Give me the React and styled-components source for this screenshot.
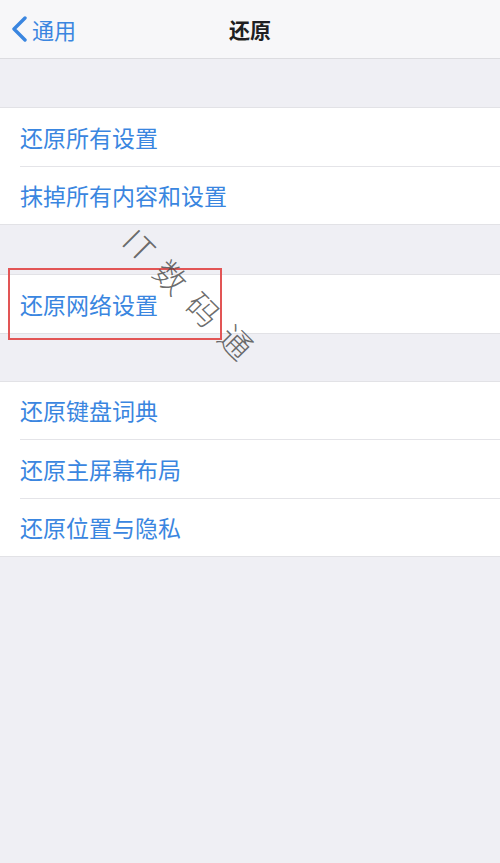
import React from "react";
import styled, { createGlobalStyle } from "styled-components";

const Global = createGlobalStyle`
  html, body { margin: 0; padding: 0; }
  body {
    background: #efeff4;
    font-family: "Noto Sans CJK SC", "Noto Sans", sans-serif;
  }
`;

const Page = styled.div`
  position: relative;
  min-height: 863px;
  background: #efeff4;
  overflow: hidden;
`;

const NavBar = styled.header`
  height: 58px;
  background: #f7f7f9;
  border-bottom: 1px solid #dcdce0;
  display: grid;
  grid-template-columns: 1fr auto 1fr;
  align-items: center;
`;

const Back = styled.div`
  display: flex;
  align-items: center;
  gap: 4px;
  padding-left: 11px;
  color: #3a86e0;
  font-size: 22px;
`;

const Title = styled.div`
  font-size: 21px;
  font-weight: 700;
  color: #1f1f22;
`;

const Content = styled.main`
  display: flex;
  flex-direction: column;
  padding-top: 48px;
`;

const Group = styled.section`
  position: relative;
  background: #fff;
  border-top: 1px solid #e2e2e6;
  border-bottom: 1px solid #e2e2e6;
  margin-bottom: ${(p) => p.$gap}px;
`;

const Row = styled.div`
  height: 57.5px;
  display: flex;
  align-items: center;
  padding-left: 20px;
  font-size: 23px;
  color: #3a86e0;
`;

const Separator = styled.div`
  height: 1px;
  margin-left: 20px;
  background: #e4e4e8;
`;

const Highlight = styled.div`
  position: absolute;
  left: 8px;
  top: -7px;
  width: 210px;
  height: 68px;
  border: 2px solid #e25555;
  pointer-events: none;
`;

const Watermark = styled.div`
  position: absolute;
  left: 194px;
  top: 298px;
  font-family: "Noto Sans CJK SC", sans-serif;
  font-weight: 300;
  font-size: 32px;
  letter-spacing: 14px;
  color: rgba(70, 70, 70, 0.8);
  transform: translate(-50%, -50%) rotate(45deg);
  white-space: nowrap;
  pointer-events: none;
`;

const Latin = styled.span`
  letter-spacing: 2px;
  margin-right: 12px;
`;

const groups = [
  { items: ["还原所有设置", "抹掉所有内容和设置"], gap: 49 },
  { items: ["还原网络设置"], gap: 47 },
  { items: ["还原键盘词典", "还原主屏幕布局", "还原位置与隐私"], gap: 0 },
];

export default function App() {
  return (
    <Page>
      <Global />
      <NavBar>
        <Back>
          <svg width="17" height="26" viewBox="0 0 17 26">
            <path d="M14 2 L3 13 L14 24" fill="none" stroke="#3a86e0" strokeWidth="3.4" strokeLinecap="round" strokeLinejoin="round" />
          </svg>
          <span>通用</span>
        </Back>
        <Title>还原</Title>
        <div />
      </NavBar>
      <Content>
        {groups.map((g, gi) => (
          <Group key={gi} $gap={g.gap}>
            {g.items.map((t, i) => (
              <React.Fragment key={t}>
                {i > 0 && <Separator />}
                <Row>{t}</Row>
              </React.Fragment>
            ))}
            {gi === 1 && <Highlight />}
          </Group>
        ))}
      </Content>
      <Watermark>
        <Latin>IT</Latin>数码通
      </Watermark>
    </Page>
  );
}
